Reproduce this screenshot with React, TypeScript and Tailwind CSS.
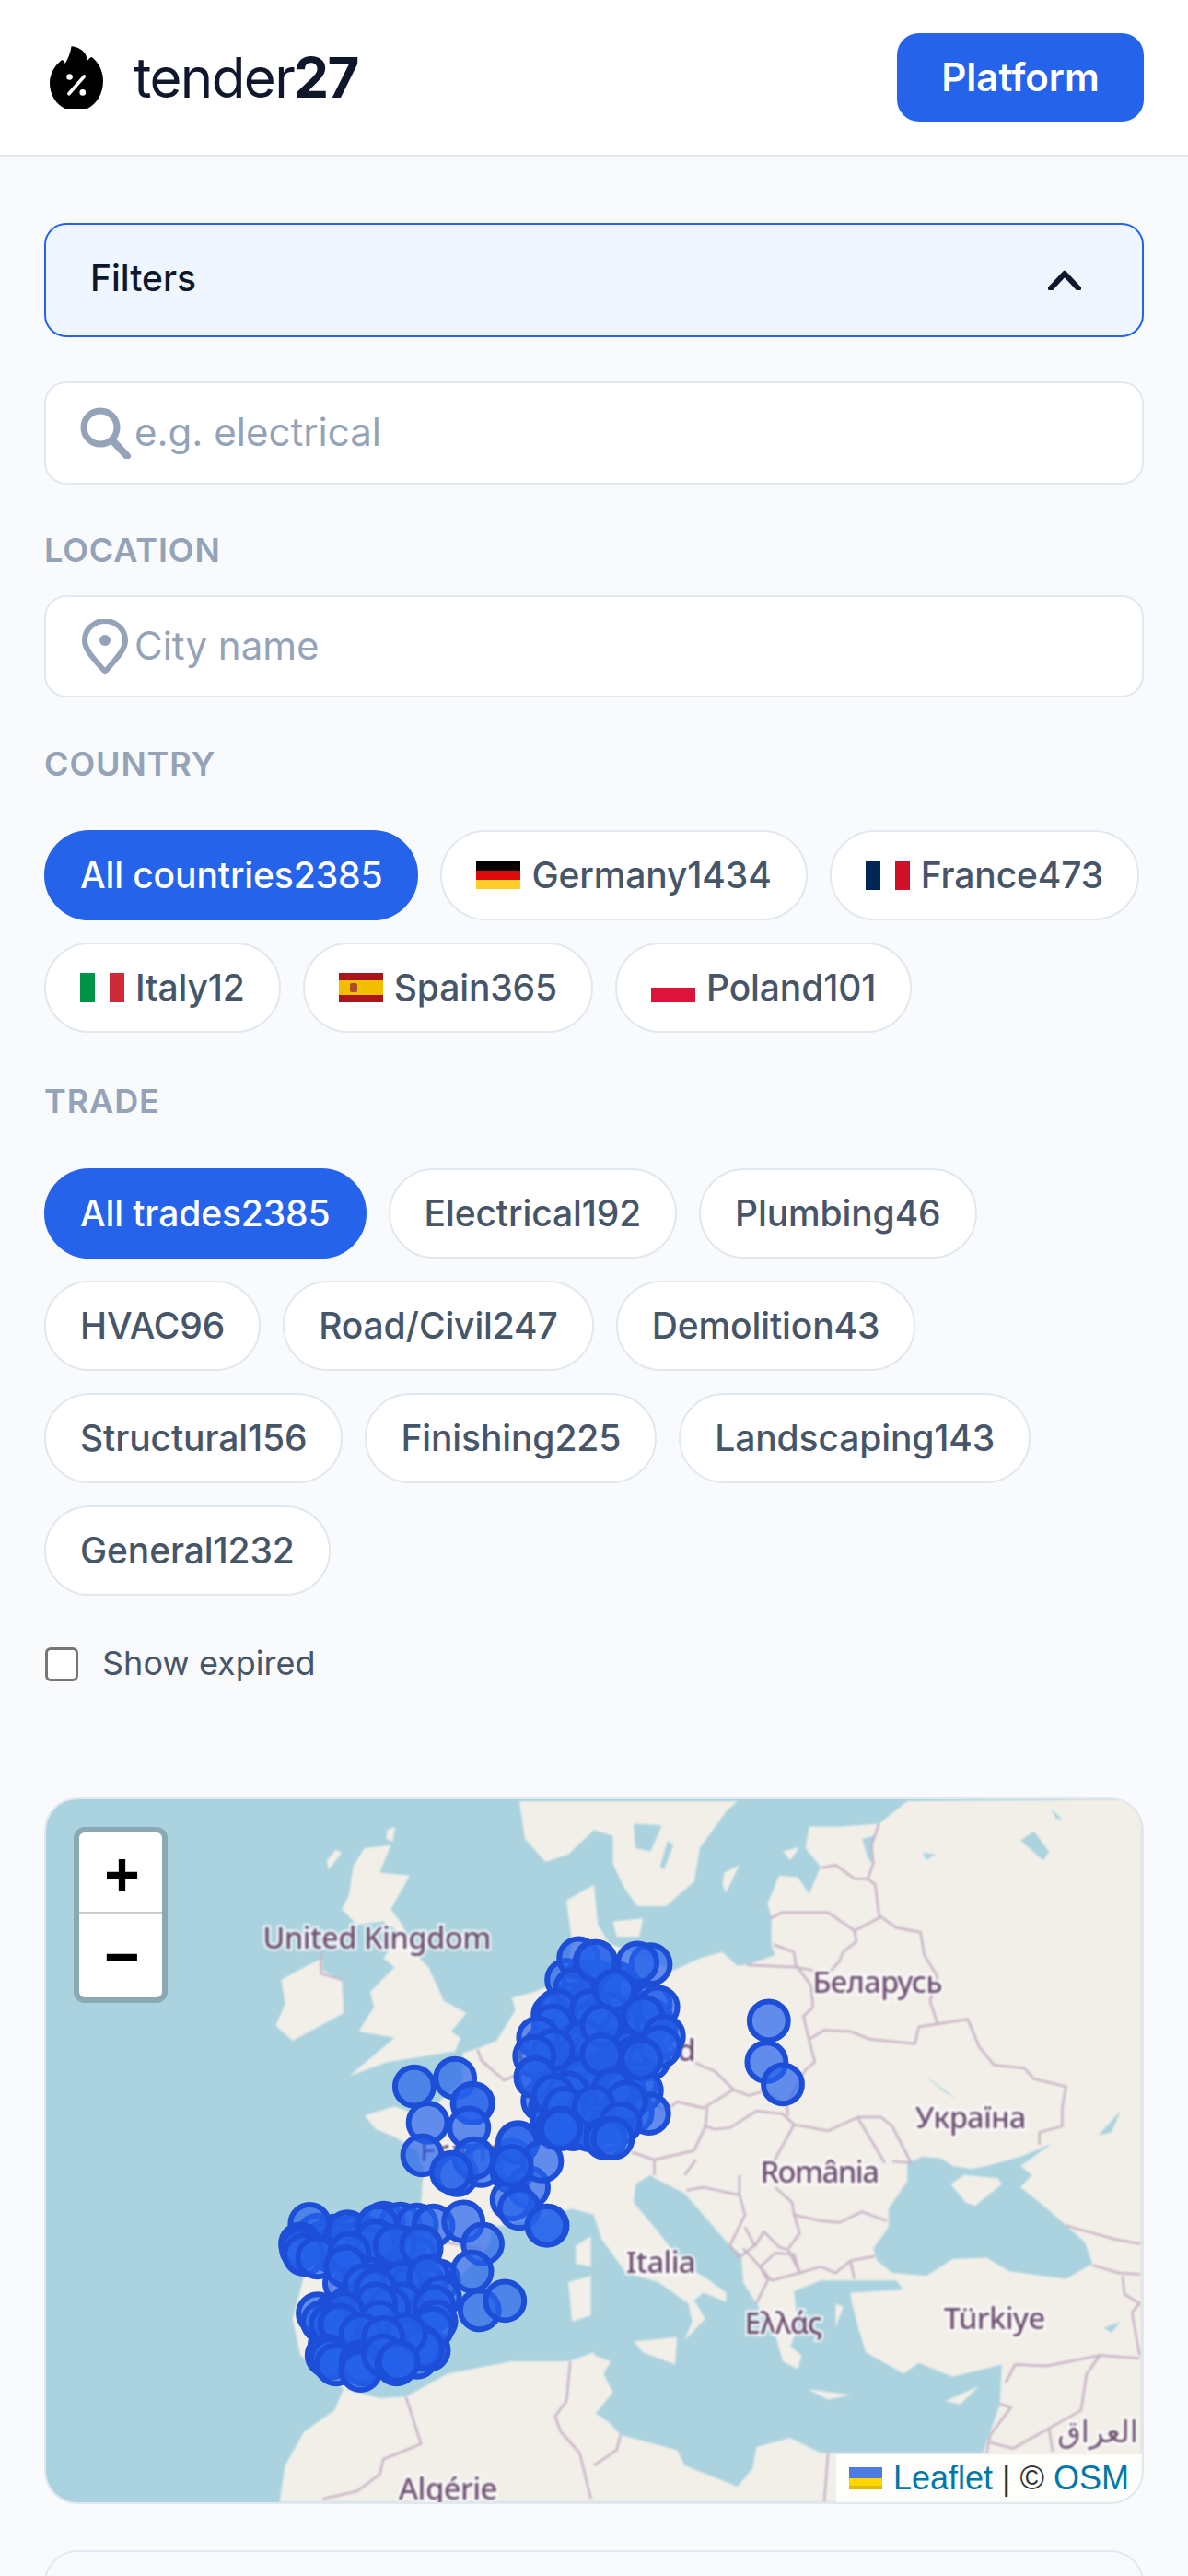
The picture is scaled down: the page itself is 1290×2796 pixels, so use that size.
import React from 'react';

const FONT = { fontFamily: 'Inter, "Noto Sans", sans-serif' };

type Chip = { label: string; count: number; flag?: string; active?: boolean };

const countries: Chip[] = [
  { label: 'All countries', count: 2385, active: true },
  { label: 'Germany', count: 1434, flag: 'de' },
  { label: 'France', count: 473, flag: 'fr' },
  { label: 'Italy', count: 12, flag: 'it' },
  { label: 'Spain', count: 365, flag: 'es' },
  { label: 'Poland', count: 101, flag: 'pl' },
];

const trades: Chip[] = [
  { label: 'All trades', count: 2385, active: true },
  { label: 'Electrical', count: 192 },
  { label: 'Plumbing', count: 46 },
  { label: 'HVAC', count: 96 },
  { label: 'Road/Civil', count: 247 },
  { label: 'Demolition', count: 43 },
  { label: 'Structural', count: 156 },
  { label: 'Finishing', count: 225 },
  { label: 'Landscaping', count: 143 },
  { label: 'General', count: 1232 },
];

const Flag = ({ code }: { code: string }) => {
  const bars: Record<string, React.ReactNode> = {
    de: (
      <>
        <rect width="48" height="10" y="1" fill="#000" />
        <rect width="48" height="10" y="11" fill="#dd0a0a" />
        <rect width="48" height="10" y="21" fill="#ffce2b" />
      </>
    ),
    fr: (
      <>
        <rect width="16" height="32" fill="#002654" />
        <rect x="32" width="16" height="32" fill="#ce1126" />
      </>
    ),
    it: (
      <>
        <rect width="16" height="32" fill="#009246" />
        <rect x="32" width="16" height="32" fill="#ce2b37" />
      </>
    ),
    es: (
      <>
        <rect width="48" height="32" fill="#aa151b" />
        <rect width="48" height="16" y="8" fill="#f1bf00" />
        <rect x="12" y="11" width="8" height="10" rx="2" fill="#ad4a2a" />
      </>
    ),
    pl: <rect width="48" height="16" y="16" fill="#dc143c" />,
  };
  return (
    <svg width="48" height="32" viewBox="0 0 48 32" className="shrink-0">
      {bars[code]}
    </svg>
  );
};

const Pill = ({ label, count, flag, active }: Chip) => (
  <div
    className={`flex h-[98px] items-center gap-3 rounded-full border-[2px] px-[37px] text-[39px] font-medium tracking-[-0.12px] ${
      active ? 'border-[#2563eb] bg-[#2563eb] text-white' : 'border-[#e2e8f0] bg-white text-[#475569]'
    }`}
  >
    {flag && <Flag code={flag} />}
    <span>
      <span>{label}</span>
      <span>{count}</span>
    </span>
  </div>
);

const SectionLabel = ({ children, className }: { children: string; className: string }) => (
  <div className={`text-[36px] leading-[54px] font-semibold uppercase tracking-[0.9px] text-[#94a3b8] ${className}`}>
    {children}
  </div>
);

const Logo = () => (
  <svg width="58" height="68" viewBox="165 150 175 203" className="shrink-0">
    <path
      d="M236 150c20 2 40 12 48 30 2 8 4 14 6 16 3-6 7-10 13-11 24 18 37 48 37 78 0 55-36 99-88 99-50 0-87-42-87-92 0-30 16-58 40-76 5 2 8 6 10 12 10-14 18-34 21-56z"
      fill="#000"
    />
    <circle cx="230" cy="250" r="10" fill="#fff" />
    <circle cx="273" cy="301" r="10" fill="#fff" />
    <path d="M228 305l50-57" stroke="#fff" strokeWidth="11" strokeLinecap="round" />
  </svg>
);

// coastlines were traced tile by tile, so points are kept in tile coords
const SX = 645 / 1568;
const tile = (ox: number, oy: number) => (s: string) =>
  s
    .trim()
    .split(/\s+/)
    .map((p) => {
      const [u, v] = p.split(',').map(Number);
      return [ox + u * SX, oy + v / 3] as [number, number];
    });
const A = tile(0, 1920);
const B = tile(645, 1920);
const C = tile(0, 2360);
const D = tile(645, 2360);
const pts = (...parts: [number, number][][]) =>
  parts
    .flat()
    .map(([x, y]) => `${x.toFixed(1)},${y.toFixed(1)}`)
    .join(' ');

const SEA = '#aad3df';
const LAND = '#f2efe9';

const lands = [
  // Ireland
  pts(A('850,610 850,650 900,680 905,790 860,820 770,880 725,830 750,760 740,680 800,640')),
  // Great Britain
  pts(
    A(
      '1030,240 960,250 930,310 920,400 900,450 940,500 1010,490 1060,530 1010,610 1040,640 975,720 985,770 945,850 1040,870 920,995 1020,950 1200,915 1215,870 1190,850 1230,790 1170,750 1130,640 1090,590 1060,500 1030,450 1080,340 1000,330',
    ),
  ),
  pts(A('1020,190 1042,180 1035,228 1018,220')),
  pts(A('885,255 900,265 865,320 860,290')),
  // Scandinavia
  pts(
    A('1370,96 1385,220 1440,295 1500,270 1568,190'),
    B('50,210 50,300 80,380 115,440 190,440 265,360 280,250 350,130 380,96'),
  ),
  pts(B('50,490 130,480 120,540 60,540')),
  pts(B('345,330 385,305 350,395 340,370')),
  pts(B('500,260 545,245 520,290')),
  // Continent, Morocco up to the Baltic and Russia
  pts(
    [[1242, 1950], [1242, 2717]],
    C('735,1070 750,950 800,840 880,770 905,700 790,590 770,470 800,330 760,190 800,150 1000,165 1100,160 1110,100 1115,0'),
    A(
      '1120,1320 1100,1240 1040,1195 990,1170 960,1125 1040,1095 1095,1120 1100,1090 1150,1090 1220,1010 1220,920 1260,905 1310,880 1360,780 1350,740 1410,720 1450,700 1490,680 1510,560 1495,420 1568,370',
    ),
    B('10,500 40,560 210,650 280,610 340,590 380,635 410,630 480,600 470,570 470,480 460,430 490,340 540,345 570,400 600,310 560,250 570,180 650,180 755,170 830,96'),
  ),
];

const seas = [
  // Mediterranean, with Adriatic and Aegean
  pts(
    C('910,700 960,680 1100,640 1170,560 1210,470 1200,370 1225,320 1290,230 1300,170 1400,150 1510,110 1568,130'),
    D(
      '0,135 10,170 20,210 85,320 170,350 250,420 260,480 240,540 295,470 265,410 290,385 350,415 350,385 300,340 235,290 160,170 105,90 110,30 150,0 160,10 240,60 360,230 390,260 395,350 430,420 440,440 480,520 500,610 540,635 550,590 520,560 540,500 530,380 600,345 700,345 800,345 820,375 680,385 680,400 700,500 720,580 820,650 860,615 950,660 1080,620 1075,750 1030,910 600,910 520,860 430,890 420,960 380,1020 240,950 220,900 70,850 40,810 5,780 50,710 25,650 45,610 0,590',
    ),
    C('1568,580 1500,610 1350,610 1180,650 1070,725 1000,730'),
  ),
  // Black Sea and Azov
  pts(
    D('740,240 780,170 780,110 830,20'),
    B('830,1280 870,1260 920,1265 950,1290 1000,1300 1040,1290 1130,1260 1215,1215 1130,1290 1160,1320'),
    D('1130,40 1200,110 1300,220 1320,290 1250,340 1100,315 1040,270 950,275 880,330 790,320 750,280'),
  ),
  // lakes
  pts(B('105,170 180,175 150,260 110,250')),
  pts(B('195,225 210,240 185,320 175,310')),
  pts(B('710,220 740,210 735,300 725,280')),
  pts(B('1130,225 1165,195 1205,260 1190,290')),
  pts(B('1210,120 1240,155 1225,155')),
  pts(B('870,990 960,1070 930,1050')),
  pts(B('870,265 905,270 880,288')),
  pts(B('1335,1190 1395,1110 1370,1180')),
  pts(D('1350,500 1395,480 1370,515')),
];

const islands = [
  pts(D('105,545 220,530 215,620 130,580')),
  pts(D('565,700 680,720 620,735')),
  pts(D('930,740 1020,690 970,750')),
  pts(C('1500,350 1560,330 1560,460 1510,480')),
  pts(C('1520,230 1560,200 1560,300 1520,290')),
  pts(D('945,30 980,0 1070,10 1080,30 1010,100 985,90')),
  pts(D('640,420 660,430 640,500')),
];

const borders = [
  A('845,590 845,660 900,680'),
  A('1260,910 1270,945 1330,1010 1365,990 1400,1020'),
  B('405,632 540,640 575,700 580,770 555,800 570,880 585,950 560,975 510,1090 515,1125'),
  B('465,480 500,460 620,460 690,520 760,475'),
  B('600,315 640,305 690,350 725,350'),
  B('755,170 735,240 740,300 725,350 745,370 755,470 800,510 865,525 875,600 910,670 890,750 910,825 990,810 1020,900 1060,960 1140,970 1165,1005 1250,1030 1240,1100 1240,1160 1180,1180 1180,1220'),
  B('570,875 610,845 680,850 730,875 850,890 860,835 910,825'),
  B('540,640 620,660 650,620 660,590 695,555 690,520'),
  B('475,565 530,590 535,640'),
  B('265,950 290,965 320,980 370,1040 410,1060 450,1045 510,1090'),
  B('150,1080 190,1110 220,1080 290,1100 370,1040'),
  B('300,1100 295,1160 320,1170 360,1165 430,1110 500,1120 530,1155 620,1175 700,1130 760,1130 790,1160 840,1280 790,1275'),
  B('700,1135 770,1280'),
  B('530,1155 470,1290'),
  B('295,1160 265,1240 160,1270 100,1245'),
  B('160,1270 160,1320'),
  B('270,1270 240,1320'),
  D('245,50 290,40 385,65 400,130 360,230'),
  D('385,0 385,65'),
  D('480,40 525,90 530,130 545,190 515,240'),
  D('530,130 600,150 650,155 710,120 775,150'),
  D('515,245 545,320 600,300 640,320 680,280 745,265'),
  D('440,300 480,255 530,260 545,320 470,345 440,300'),
  D('395,240 440,300 460,345 430,420'),
  D('425,235 450,185 490,235 515,245'),
  D('360,230 385,270 425,230 400,170'),
  D('680,285 690,340'),
  D('1250,165 1380,210 1447,225'),
  D('1320,295 1390,320 1447,325'),
  D('1400,330 1405,390 1445,420 1425,450 1445,590'),
  D('1090,680 1115,620 1200,625 1340,590 1445,600'),
  D('1340,590 1305,650 1290,770 1110,895 1050,875'),
  D('1205,830 1215,905'),
  D('1075,750 1105,760 1050,850 1040,910'),
  D('70,850 60,900 0,950'),
  D('620,910 610,1068'),
  C('1070,725 1110,880 1010,930 1000,980 940,1035 850,1060'),
  C('1505,610 1495,740 1465,790 1480,840 1530,910 1560,1060'),
  C('870,340 870,400'),
  C('1170,220 1270,240'),
];

const labels: { text: string; x: number; y: number; len?: number; anchor?: 'end' }[] = [
  { text: 'France', x: 455, y: 2345, len: 110 },
  { text: 'Deutschland', x: 560, y: 2235, len: 196 },
  { text: 'United Kingdom', x: 284, y: 2113, len: 249 },
  { text: 'Беларусь', x: 883, y: 2161, len: 142 },
  { text: 'Україна', x: 995, y: 2309, len: 121 },
  { text: 'România', x: 826, y: 2368, len: 130 },
  { text: 'Italia', x: 680, y: 2467, len: 76 },
  { text: 'Ελλάς', x: 809, y: 2533, len: 85 },
  { text: 'Türkiye', x: 1026, y: 2528, len: 111 },
  { text: 'Algérie', x: 432, y: 2714, len: 108 },
  { text: 'العراق', x: 1238, y: 2652, anchor: 'end' },
];

// dense middle of the two clusters, drawn first so the traced ones sit on top
const grid = (x0: number, x1: number, y0: number, y1: number) => {
  const out: [number, number][] = [];
  let row = 0;
  for (let y = y0; y <= y1; y += 17) {
    for (let x = x0 + (row % 2) * 9; x <= x1; x += 18) {
      out.push([x + ((x * 7 + y) % 21) - 10, y + ((x + y * 3) % 17) - 8]);
    }
    row++;
  }
  return out;
};

const markers: [number, number][] = [
  ...grid(590, 710, 2190, 2300),
  ...grid(610, 680, 2150, 2190),
  ...grid(605, 670, 2300, 2325),
  ...grid(335, 465, 2420, 2450),
  ...grid(370, 475, 2450, 2510),
  ...grid(350, 465, 2510, 2565),
  ...C('1205,0 1270,-30 1350,-50 1350,-10 1395,40 1350,80 1370,110 1222,152 1445,165 1442,165 1273,225 1245,315 1265,442 1332,412'),
  ...A('1092,1030 1200,1003 1128,1148 1248,1085 1245,1085 1237,1165 1113,1255 1250,1265 1190,1310 1367,1212 1365,1215 1430,1275 1350,1290'),
  ...A('1527,610 1570,620 1517,710 1470,780 1560,780 1460,830 1420,870 1540,880 1460,910 1410,930 1413,1000 1535,1000 1500,1050 1460,1060 1490,1100 1480,1165 1480,1170'),
  ...B('5,620 150,630 115,625 55,715 150,760 170,770 130,800 20,830 185,865 175,900 125,940 20,925 50,1040 85,1080 0,1095 70,1150 30,1200 50,1200'),
  ...B('463,815 457,950 500,1023'),
  ...C('815,160 790,225 792,240 800,260 835,270 915,185 995,165 965,240 990,215 920,255 910,300 1040,230 1110,232'),
  ...C('1060,350 1130,330 960,360 1060,420 990,375 1160,400 1145,430 1150,478 1140,500 1110,560 1115,570 1025,435 990,420 905,450 870,490 895,490 1000,480 950,520 1070,520 1010,530'),
  ...C('860,590 870,600 885,620 950,610 955,620 950,640 1010,590 1045,620 1050,610'),
];

const EuropeMap = () => (
  <svg viewBox="48 1950 1194 767" className="absolute inset-0 h-full w-full" preserveAspectRatio="none">
    <rect x="48" y="1950" width="1194" height="767" fill={SEA} />
    <g className="blur-[1px]">
      {lands.map((p, i) => (
        <polygon key={i} points={p} fill={LAND} />
      ))}
      {seas.map((p, i) => (
        <polygon key={i} points={p} fill={SEA} />
      ))}
      {islands.map((p, i) => (
        <polygon key={i} points={p} fill={LAND} />
      ))}
      {borders.map((b, i) => (
        <polyline key={i} points={pts(b)} fill="none" stroke="#c8b4c6" strokeWidth="2.5" strokeLinejoin="round" />
      ))}
      {labels.map((l) => (
        <text
          key={l.text}
          x={l.x}
          y={l.y}
          fontSize="33"
          fontWeight="500"
          textLength={l.len}
          textAnchor={l.anchor}
          fill="#6c4f70"
          stroke="#fff"
          strokeOpacity="0.75"
          strokeWidth="5"
          paintOrder="stroke"
          style={{ fontFamily: '"Noto Sans", "DejaVu Sans", sans-serif' }}
        >
          {l.text}
        </text>
      ))}
    </g>
    {markers.map(([x, y], i) => (
      <circle key={i} cx={x} cy={y} r="21" fill="#2563eb" fillOpacity="0.7" stroke="#1d4ed8" strokeWidth="6" />
    ))}
  </svg>
);

export default function App() {
  return (
    <div className="h-[2796px] overflow-hidden bg-[#f8fafc]" style={FONT}>
      {/* Header */}
      <header className="flex h-[170px] items-center justify-between border-b-[2px] border-[#e2e8f0] bg-white pr-12 pl-[54px]">
        <div className="flex items-center gap-[33px]">
          <Logo />
          <div className="text-[60px] leading-none tracking-[-1.6px] text-[#0f172a]">
            tender<span className="font-bold">27</span>
          </div>
        </div>
        <button className="flex h-[96px] w-[268px] items-center justify-center rounded-[24px] bg-[#2563eb] pb-[2px] text-[42px] font-semibold text-white">
          Platform
        </button>
      </header>

      <main className="px-12 pt-[72px]">
        {/* Filters toggle */}
        <button className="flex h-[124px] w-full items-center justify-between rounded-[24px] border-[2px] border-[#2563eb] bg-[#eff6ff] pr-[66px] pl-[48px] text-[39px] font-medium text-[#0f172a]">
          <span className="pb-[3px]">Filters</span>
          <svg width="36" height="22" viewBox="0 0 36 22" fill="none">
            <path d="M3 20L18 4l15 16" stroke="#0f172a" strokeWidth="6" strokeLinecap="round" strokeLinejoin="round" />
          </svg>
        </button>

        {/* Search */}
        <div className="mt-12 flex h-[112px] items-center gap-[3px] rounded-[24px] border-[2px] border-[#e2e8f0] bg-white pl-[37px] text-[42px] text-[#94a3b8]">
          <svg width="56" height="56" viewBox="0 0 56 56" fill="none" className="shrink-0">
            <circle cx="22" cy="22" r="18" stroke="#94a3b8" strokeWidth="7" />
            <path d="M35 36l16 17" stroke="#94a3b8" strokeWidth="8" strokeLinecap="round" />
          </svg>
          <span className="pb-[3px]">e.g. electrical</span>
        </div>

        <SectionLabel className="mt-[44px] mb-[22px]">Location</SectionLabel>
        <div className="flex h-[111px] items-center gap-[7px] rounded-[24px] border-[2px] border-[#e2e8f0] bg-white pl-[39px] text-[42px] text-[#94a3b8]">
          <svg width="50" height="60" viewBox="0 0 50 60" fill="none" className="shrink-0">
            <path
              d="M25 57C12 42 3 33 3 23a22 21 0 0 1 44 0c0 10-9 19-22 34z"
              stroke="#94a3b8"
              strokeWidth="6"
              strokeLinejoin="round"
            />
            <circle cx="25" cy="23" r="6" fill="#94a3b8" />
          </svg>
          <span className="pb-[3px]">City name</span>
        </div>

        <SectionLabel className="mt-[45px] mb-[45px]">Country</SectionLabel>
        <div className="flex flex-wrap gap-x-6 gap-y-6">
          {countries.map((c) => (
            <Pill key={c.label} {...c} />
          ))}
        </div>

        <SectionLabel className="mt-[47px] mb-[46px]">Trade</SectionLabel>
        <div className="flex flex-wrap gap-x-6 gap-y-6">
          {trades.map((t) => (
            <Pill key={t.label} {...t} />
          ))}
        </div>

        <div className="mt-[46px] flex items-center gap-[26px] text-[36px] text-[#475569]">
          <span className="ml-px h-[37px] w-[36px] rounded-[6px] border-[3px] border-[#767676] bg-white" />
          <span className="pb-[2px]">Show expired</span>
        </div>

        {/* Map */}
        <div className="relative mt-[117px] h-[767px] overflow-hidden rounded-[36px] border-[2px] border-[#e2e8f0]">
          <EuropeMap />
          <div className="absolute top-[30px] left-[30px] w-[102px] overflow-hidden rounded-[12px] border-[6px] border-[#8aa9b2] bg-white text-black">
            <div
              className="flex h-[88px] items-center justify-center border-b-[2px] border-[#ccc] pt-[14px] pl-[3px] text-[66px] font-bold"
              style={{ fontFamily: '"Liberation Mono", monospace' }}
            >
              +
            </div>
            <div
              className="flex h-[91px] items-center justify-center pt-[12px] pl-[3px] text-[66px] font-bold"
              style={{ fontFamily: '"Liberation Mono", monospace' }}
            >
              −
            </div>
          </div>
          <div
            className="absolute right-0 bottom-0 flex h-[52px] items-center gap-[12px] bg-white/85 pr-[14px] pl-[14px] text-[36px] text-[#333]"
            style={{ fontFamily: '"Liberation Sans", Arial, sans-serif' }}
          >
            <svg width="36" height="24" viewBox="0 0 36 24" className="shrink-0">
              <rect width="36" height="12" fill="#4c7be1" />
              <rect y="12" width="36" height="12" fill="#ffd500" />
              <rect y="20" width="36" height="4" fill="#e0bc00" />
            </svg>
            <span>
              <span className="text-[#0078a8]">Leaflet</span> | © <span className="text-[#0078a8]">OSM</span>
            </span>
          </div>
        </div>

        {/* Next card, cut off by the fold */}
        <div className="mt-[50px] h-[120px] rounded-[36px] border-[2px] border-[#e2e8f0]" />
      </main>
    </div>
  );
}
